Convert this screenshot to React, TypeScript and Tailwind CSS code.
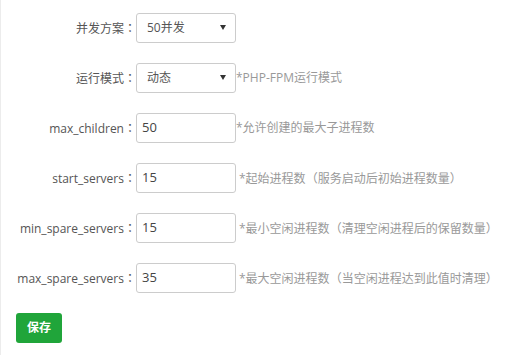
import React from 'react';

type Row = {
  label: string;
  kind: 'select' | 'input';
  value: string;
  hint?: string;
  hintGap?: boolean;
};

const rows: Row[] = [
  { label: '并发方案：', kind: 'select', value: '50并发' },
  { label: '运行模式：', kind: 'select', value: '动态', hint: '*PHP-FPM运行模式' },
  { label: 'max_children：', kind: 'input', value: '50', hint: '*允许创建的最大子进程数' },
  { label: 'start_servers：', kind: 'input', value: '15', hint: '*起始进程数（服务启动后初始进程数量）', hintGap: true },
  { label: 'min_spare_servers：', kind: 'input', value: '15', hint: '*最小空闲进程数（清理空闲进程后的保留数量）', hintGap: true },
  { label: 'max_spare_servers：', kind: 'input', value: '35', hint: '*最大空闲进程数（当空闲进程达到此值时清理）', hintGap: true },
];

// fullwidth punctuation is centred in the reference, which the TC face does
const punct = (text: string) =>
  text.split(/([：（）])/).map((part, i) =>
    /^[：（）]$/.test(part) ? (
      <span key={i} style={{ fontFamily: '"Noto Sans CJK TC", sans-serif' }}>
        {part}
      </span>
    ) : (
      part
    )
  );

const Arrow = () => (
  <svg width="6" height="5" viewBox="0 0 6 5" className="absolute right-[9px] top-[11px]">
    <polygon points="0,0 6,0 3,5" fill="#333" />
  </svg>
);

export default function App() {
  return (
    <div
      className="w-[516px] h-[355px] bg-white border-l border-[#ececec] pt-[13px] text-[12px] text-[#555]"
      style={{ fontFamily: '"Open Sans", "Noto Sans CJK SC", sans-serif' }}
    >
      {rows.map((r) => (
        <div key={r.label} className="flex items-center h-[30px] mb-[20px]">
          <div className="w-[135px] text-right whitespace-nowrap text-[#555]">{punct(r.label)}</div>
          {r.kind === 'select' ? (
            <div className="relative w-[100px] h-[30px] border border-[#ccc] rounded-[3px] bg-white flex items-center pl-[10px] text-[#555]">
              {r.value}
              <Arrow />
            </div>
          ) : (
            <div className="w-[100px] h-[30px] border border-[#ccc] rounded-[3px] bg-white flex items-center pl-[5px] text-[13px] text-[#444]">
              {r.value}
            </div>
          )}
          {r.hint && (
            <div className={`whitespace-nowrap text-[#999] ${r.hintGap ? 'ml-[3px]' : ''}`}>{punct(r.hint)}</div>
          )}
        </div>
      ))}
      <button className="ml-[15px] w-[46px] h-[30px] rounded-[3px] bg-[#20a53a] text-white text-[12px] font-bold flex items-center justify-center">
        保存
      </button>
    </div>
  );
}
